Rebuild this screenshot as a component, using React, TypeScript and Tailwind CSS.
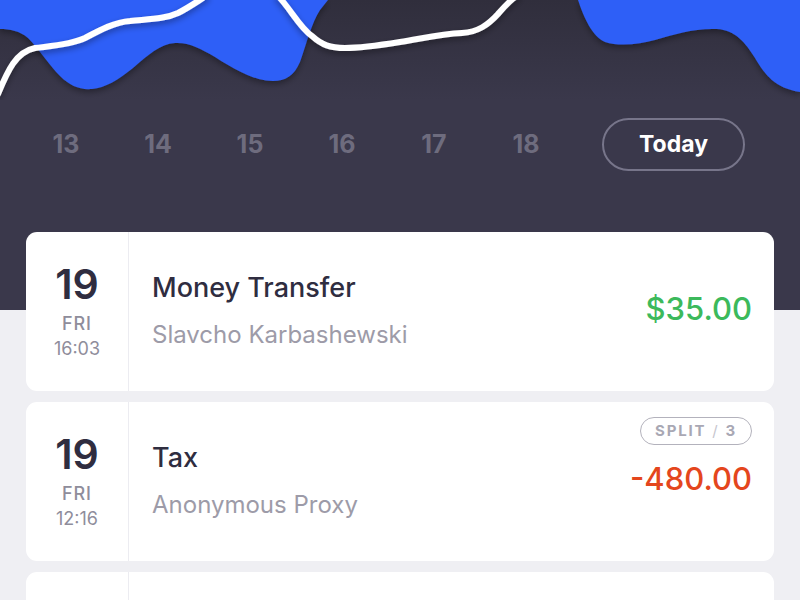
import React from "react";

const days = ["13", "14", "15", "16", "17", "18"];

type Tx = {
  day: string;
  weekday: string;
  time: string;
  title: string;
  party: string;
  amount: string;
  positive: boolean;
  split?: string;
};

const transactions: Tx[] = [
  {
    day: "19",
    weekday: "FRI",
    time: "16:03",
    title: "Money Transfer",
    party: "Slavcho Karbashewski",
    amount: "$35.00",
    positive: true,
  },
  {
    day: "19",
    weekday: "FRI",
    time: "12:16",
    title: "Tax",
    party: "Anonymous Proxy",
    amount: "-480.00",
    positive: false,
    split: "3",
  },
];

function Waves() {
  return (
    <svg width="800" height="100" viewBox="0 0 800 100" className="block">
      <defs>
        <linearGradient id="shade" x1="0" y1="0" x2="0" y2="1">
          <stop offset="0" stopColor="#302e3c" />
          <stop offset="1" stopColor="#3a384b" />
        </linearGradient>
        <filter id="soft" x="-10%" y="-30%" width="120%" height="160%">
          <feDropShadow dx="0" dy="3" stdDeviation="3" floodColor="#000" floodOpacity="0.35" />
        </filter>
      </defs>
      <rect x="0" y="0" width="800" height="100" fill="url(#shade)" />
      <g filter="url(#soft)">
        <path
          d="M0,0 L0,29 C10,29 20,31 28,38 C38,48 50,66 60,76 C70,86 80,90 92,89 C105,88 118,80 133,68 C148,55 160,44 175,43 C188,42 200,48 215,57 C235,70 255,81 273,81 C285,81 294,76 300,62 C306,45 312,22 320,10 L328,0 Z"
          fill="#2e5ff7"
        />
        <path
          d="M578,0 C584,18 592,36 605,42 C620,47 640,44 655,40 C675,34 695,28 717,29 C735,30 745,42 755,58 C765,75 775,88 800,92 L800,0 Z"
          fill="#2e5ff7"
        />
      </g>
      <g filter="url(#soft)" fill="none" stroke="#ffffff" strokeWidth="6" strokeLinecap="round">
        <path d="M-2,94 C8,70 16,52 35,48 C50,46 70,45 85,38 C100,30 115,22 130,21 C150,19 165,19 178,13 C188,8 195,3 206,-4" />
        <path d="M278,-4 C290,8 300,28 312,36 C322,45 330,48 345,48 C360,48 375,46 400,42 C420,39 440,34 462,33 C478,32 488,25 498,14 C505,6 510,0 517,-4" />
      </g>
    </svg>
  );
}

function Card({ tx }: { tx: Tx }) {
  return (
    <div className="relative flex h-[159px] shrink-0 rounded-[11px] bg-white">
      <div className="flex w-[103px] flex-col items-center justify-center border-r border-[#ececf1]">
        <span className="text-[41px] font-semibold leading-[44px] text-[#2f2d40]">{tx.day}</span>
        <span className="mt-[6px] text-[18px] font-medium leading-[24px] tracking-[0.05em] text-[#8f8d9b]">{tx.weekday}</span>
        <span className="mt-[1px] text-[18px] leading-[24px] text-[#8f8d9b]">{tx.time}</span>
      </div>
      <div className="flex flex-1 items-center pl-[23px] pr-[22px]">
        <div className="flex-1">
          <p className="text-[27px] font-medium leading-[34px] text-[#2f2d40]">{tx.title}</p>
          <p className="mt-[13px] text-[24px] leading-[34px] text-[#9d9ba8]">{tx.party}</p>
        </div>
        <p
          className={
            tx.positive
              ? "mb-[4px] text-[31px] font-medium text-[#3cb95b]"
              : "mb-[4px] text-[31px] font-medium text-[#e4461d]"
          }
        >
          {tx.amount}
        </p>
      </div>
      {tx.split && (
        <div className="absolute right-[22px] top-[15px] flex h-[28px] items-center rounded-full border-[1.5px] border-[#b3b2bc] px-[14px] text-[15px] font-bold tracking-[0.12em] text-[#a9a8b4]">
          SPLIT<span className="mx-[6px] font-normal text-[#c6c5ce]">/</span>
          {tx.split}
        </div>
      )}
    </div>
  );
}

export default function App() {
  return (
    <div className="h-[600px] w-[800px] overflow-hidden bg-[#efeff3] font-['Inter',sans-serif]">
      <header className="h-[310px] bg-[#3a384b]">
        <Waves />
        <div className="mt-[18px] flex h-[53px] items-center pl-[20px]">
          {days.map((d) => (
            <span key={d} className="w-[92px] text-center text-[25px] font-bold text-[#6e6c7e]">
              {d}
            </span>
          ))}
          <div className="ml-[30px] flex h-[53px] w-[143px] items-center justify-center rounded-full border-2 border-[#77758a] text-[23px] font-bold text-white">
            Today
          </div>
        </div>
      </header>

      <main className="mt-[-78px] flex flex-col gap-[11px] px-[26px]">
        {transactions.map((tx, i) => (
          <Card key={i} tx={tx} />
        ))}
        {/* next row, cut off by the bottom of the screen */}
        <div className="flex h-[159px] shrink-0 rounded-[11px] bg-white">
          <div className="w-[103px] border-r border-[#ececf1]" />
        </div>
      </main>
    </div>
  );
}
